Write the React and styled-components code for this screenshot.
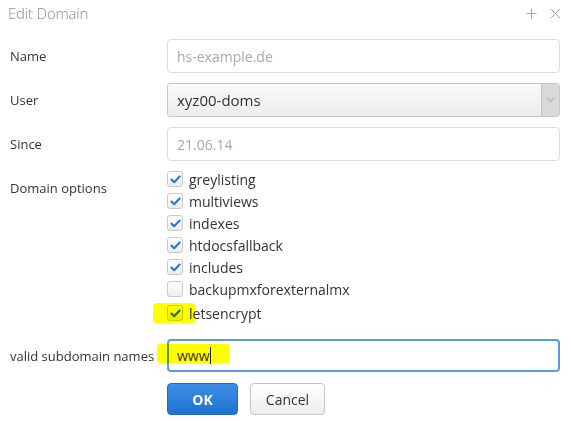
import React from "react";
import styled, { createGlobalStyle } from "styled-components";

const GlobalStyle = createGlobalStyle`
  html, body {
    margin: 0;
    padding: 0;
    background: #fff;
  }
  body {
    font-family: "Open Sans", "DejaVu Sans", sans-serif;
    color: #333;
  }
`;

const Dialog = styled.div`
  width: 571px;
  height: 421px;
  overflow: hidden;
  position: relative;
`;

const Header = styled.div`
  height: 26px;
  display: flex;
  align-items: center;
  justify-content: space-between;
  padding: 0 10px 0 8px;
`;

const Title = styled.h1`
  margin: 0;
  font-size: 15px;
  font-weight: 300;
  color: #8c8c8c;
  letter-spacing: -0.2px;
`;

const HeaderTools = styled.div`
  display: flex;
  gap: 13px;
  align-items: center;
  color: #aaa;
`;

const Form = styled.form`
  display: grid;
  grid-template-columns: 157px 393px;
  column-gap: 0;
  row-gap: 10px;
  padding: 13px 11px 0 10px;
  align-items: center;
`;

const Label = styled.label`
  font-size: 13px;
  color: #333;
  align-self: ${(p) => (p.$top ? "start" : "center")};
  padding-top: ${(p) => (p.$top ? "8px" : "0")};
`;

const Input = styled.div`
  box-sizing: border-box;
  height: ${(p) => (p.$focus ? "33px" : "34px")};
  border: ${(p) => (p.$focus ? "2px solid #5c9ae0" : "1px solid #dcdcdc")};
  border-radius: 4px;
  padding: 0 ${(p) => (p.$focus ? "8px" : "9px")};
  display: flex;
  align-items: center;
  font-size: 14px;
  color: ${(p) => (p.$muted ? "#a8a8a8" : "#333")};
  background: #fff;
  position: relative;
`;

const Caret = styled.span`
  display: inline-block;
  width: 1px;
  height: 17px;
  background: #222;
`;

const Select = styled.div`
  box-sizing: border-box;
  height: 34px;
  border: 1px solid #c8c8c8;
  border-radius: 3px;
  display: flex;
  align-items: stretch;
  background: linear-gradient(#fbfbfb, #ececec);
  overflow: hidden;
`;

const SelectValue = styled.div`
  flex: 1;
  display: flex;
  align-items: center;
  padding-left: 9px;
  font-size: 15px;
  color: #333;
`;

const SelectButton = styled.div`
  width: 17px;
  border-left: 1px solid #c4c4c4;
  background: #d9d9d9;
  display: flex;
  align-items: center;
  justify-content: center;
`;

const Options = styled.div`
  display: flex;
  flex-direction: column;
  margin: -3px 0 5px;
`;

const Option = styled.div`
  height: ${(p) => (p.$last ? "24px" : "22px")};
  padding-top: ${(p) => (p.$last ? "2px" : "0")};
  box-sizing: border-box;
  display: flex;
  align-items: center;
  gap: 6px;
  font-size: 14px;
  color: #333;
  position: relative;
`;

const Box = styled.span`
  box-sizing: border-box;
  width: 16px;
  height: 16px;
  border: 1px solid #c9c9c9;
  border-radius: 3px;
  background: linear-gradient(#ffffff, #ececec);
  display: flex;
  align-items: center;
  justify-content: center;
`;

const Highlight = styled.span`
  position: absolute;
  background: #ffff00;
  mix-blend-mode: multiply;
  border-radius: 3px;
  pointer-events: none;
`;

const Buttons = styled.div`
  display: flex;
  gap: 12px;
  margin-top: 1px;
`;

const Button = styled.button`
  box-sizing: border-box;
  height: 32px;
  width: ${(p) => (p.$primary ? "71px" : "75px")};
  border-radius: 4px;
  font-family: inherit;
  font-size: 14px;
  font-weight: ${(p) => (p.$primary ? 700 : 400)};
  color: ${(p) => (p.$primary ? "#fff" : "#333")};
  border: 1px solid ${(p) => (p.$primary ? "#1f6bc4" : "#c6c6c6")};
  background: ${(p) =>
    p.$primary
      ? "linear-gradient(#3d8ee8, #1e73d0)"
      : "linear-gradient(#ffffff, #ededed)"};
`;

const Check = () => (
  <svg width="11" height="9" viewBox="0 0 11 9">
    <path
      d="M1.5 4.6 L4.2 7.2 L9.6 1.6"
      fill="none"
      stroke="#2b7bd6"
      strokeWidth="2.2"
      strokeLinecap="round"
      strokeLinejoin="round"
    />
  </svg>
);

const options = [
  ["greylisting", true],
  ["multiviews", true],
  ["indexes", true],
  ["htdocsfallback", true],
  ["includes", true],
  ["backupmxforexternalmx", false],
  ["letsencrypt", true],
];

export default function App() {
  return (
    <Dialog>
      <GlobalStyle />
      <Header>
        <Title>Edit Domain</Title>
        <HeaderTools>
          <svg width="11" height="11" viewBox="0 0 11 11">
            <path d="M5.5 0.5 V10.5 M0.5 5.5 H10.5" stroke="#a6a6a6" strokeWidth="1" />
          </svg>
          <svg width="11" height="11" viewBox="0 0 11 11">
            <path d="M1 1 L10 10 M10 1 L1 10" stroke="#a6a6a6" strokeWidth="1" />
          </svg>
        </HeaderTools>
      </Header>
      <Form>
        <Label>Name</Label>
        <Input $muted>hs-example.de</Input>

        <Label>User</Label>
        <Select>
          <SelectValue>xyz00-doms</SelectValue>
          <SelectButton>
            <svg width="9" height="6" viewBox="0 0 9 6">
              <path d="M1 1 L4.5 4.5 L8 1" fill="none" stroke="#b5b5b5" strokeWidth="1.3" />
            </svg>
          </SelectButton>
        </Select>

        <Label>Since</Label>
        <Input $muted>21.06.14</Input>

        <Label $top>Domain options</Label>
        <Options>
          {options.map(([name, on], i) => (
            <Option key={name} $last={i === options.length - 1}>
              {name === "letsencrypt" && (
                <Highlight style={{ left: -14, top: 3, width: 42, height: 20 }} />
              )}
              <Box>{on && <Check />}</Box>
              {name}
            </Option>
          ))}
        </Options>

        <Label>valid subdomain names</Label>
        <Input $focus>
          <Highlight style={{ left: -12, top: 3, width: 73, height: 19 }} />
          www<Caret />
        </Input>

        <span />
        <Buttons>
          <Button $primary>OK</Button>
          <Button>Cancel</Button>
        </Buttons>
      </Form>
    </Dialog>
  );
}
